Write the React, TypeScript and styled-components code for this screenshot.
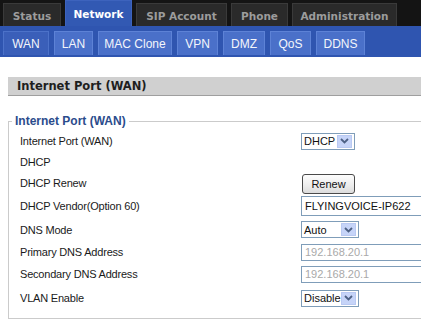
import { createGlobalStyle, styled } from "styled-components";

const Global = createGlobalStyle`
  body {
    margin: 0;
    background: #fff;
    font-family: "DejaVu Sans", Verdana, sans-serif;
  }
  #root {
    width: 421px;
    height: 326px;
    overflow: hidden;
  }
`;

const TopBar = styled.div`
  display: flex;
  align-items: flex-end;
  gap: 4px;
  height: 26px;
  padding-left: 3px;
  background: #141414;
`;

const MainTab = styled.div<{ $w: number; $active?: boolean }>`
  width: ${p => p.$w}px;
  height: ${p => (p.$active ? 26 : 23)}px;
  display: flex;
  align-items: center;
  justify-content: center;
  box-sizing: border-box;
  border: 1px solid ${p => (p.$active ? "#3d63bd" : "#3a3a3a")};
  border-bottom: none;
  background: ${p => (p.$active ? "#3259b3" : "#2a2a2a")};
  color: ${p => (p.$active ? "#ffffff" : "#9c9c9c")};
  font-size: 10.5px;
  font-weight: bold;
  padding-top: ${p => (p.$active ? 0 : 2)}px;
`;

const SubBar = styled.div`
  display: flex;
  gap: 5px;
  height: 31px;
  box-sizing: border-box;
  padding: 5px 0 0 3px;
  background: #2f55b0;
`;

const SubTab = styled.div<{ $w: number; $active?: boolean }>`
  width: ${p => p.$w}px;
  height: 24px;
  box-sizing: border-box;
  display: flex;
  align-items: center;
  justify-content: center;
  background: ${p => (p.$active ? "#3a5fb9" : "#4a70c9")};
  border: 1px solid ${p => (p.$active ? "#4c72c9" : "#5d82d6")};
  border-bottom: none;
  color: #f4f6fb;
  font-family: "Liberation Sans", Arial, sans-serif;
  font-size: 12px;
`;

const Content = styled.div`
  padding: 20px 0 0 8px;
`;

const SectionHeader = styled.div`
  height: 18px;
  display: flex;
  align-items: center;
  padding-left: 9px;
  background: #d0d0d0;
  border-bottom: 1px solid #9f9f9f;
  color: #1e1e1e;
  font-size: 11.5px;
  font-weight: bold;
`;

const Fieldset = styled.fieldset`
  margin: 18px -10px 0 0;
  padding: 2px 0 0 11px;
  height: 205px;
  box-sizing: border-box;
  border: 1px solid #cbcbcb;
`;

const Legend = styled.legend`
  padding: 0 3px;
  margin-left: -8px;
  color: #2b4c8c;
  font-family: "Liberation Sans", Arial, sans-serif;
  font-size: 12px;
  font-weight: bold;
`;

const Row = styled.div<{ $h: number }>`
  display: grid;
  grid-template-columns: 281px 1fr;
  align-items: center;
  height: ${p => p.$h}px;
`;

const Label = styled.div`
  font-family: "Liberation Sans", Arial, sans-serif;
  font-size: 11px;
  letter-spacing: -0.2px;
  color: #1a1a1a;
`;

const SelectBox = styled.div<{ $w: number }>`
  width: ${p => p.$w}px;
  height: 17px;
  box-sizing: border-box;
  display: flex;
  align-items: center;
  justify-content: space-between;
  border: 1px solid #7f9db9;
  padding: 0 2px 0 2px;
  font-family: "Liberation Sans", Arial, sans-serif;
  font-size: 11px;
  color: #111;
  background: #fff;
`;

const Arrow = styled.span`
  width: 15px;
  height: 13px;
  display: flex;
  align-items: center;
  justify-content: center;
  background: #c6d4f8;
  border: 1px solid #b9c9f2;
  box-sizing: border-box;
`;

const Button = styled.button`
  width: 53px;
  height: 20px;
  padding: 0;
  margin-left: 1px;
  border: 1px solid #4a4a4a;
  border-radius: 3px;
  background: linear-gradient(#fdfdfd, #ececec 60%, #dcdcdc);
  font-family: "Liberation Sans", Arial, sans-serif;
  font-size: 11px;
  color: #111;
`;

const TextInput = styled.div<{ $muted?: boolean }>`
  width: 140px;
  height: ${p => (p.$muted ? 17 : 20)}px;
  box-sizing: border-box;
  display: flex;
  align-items: center;
  padding-left: 3px;
  border: 1px solid #7f9db9;
  border-right: none;
  font-family: "Liberation Sans", Arial, sans-serif;
  font-size: 11px;
  color: ${p => (p.$muted ? "#a9a9a9" : "#111")};
`;

function Select({ value, w }: { value: string; w: number }) {
  return (
    <SelectBox $w={w}>
      {value}
      <Arrow>
        <svg width="9" height="6" viewBox="0 0 9 6">
          <path d="M1 1 L4.5 4.5 L8 1" fill="none" stroke="#4d6185" strokeWidth="1.8" />
        </svg>
      </Arrow>
    </SelectBox>
  );
}

const mainTabs = [
  { name: "Status", w: 58 },
  { name: "Network", w: 67, active: true },
  { name: "SIP Account", w: 91 },
  { name: "Phone", w: 57 },
  { name: "Administration", w: 105 },
];

const subTabs = [
  { name: "WAN", w: 46, active: true },
  { name: "LAN", w: 39 },
  { name: "MAC Clone", w: 74 },
  { name: "VPN", w: 41 },
  { name: "DMZ", w: 42 },
  { name: "QoS", w: 41 },
  { name: "DDNS", w: 49 },
];

function App() {
  return (
    <>
      <Global />
      <TopBar>
        {mainTabs.map(t => (
          <MainTab key={t.name} $w={t.w} $active={t.active}>
            {t.name}
          </MainTab>
        ))}
      </TopBar>
      <SubBar>
        {subTabs.map(t => (
          <SubTab key={t.name} $w={t.w} $active={t.active}>
            {t.name}
          </SubTab>
        ))}
      </SubBar>
      <Content>
        <SectionHeader>Internet Port (WAN)</SectionHeader>
        <Fieldset>
          <Legend>Internet Port (WAN)</Legend>
          <Row $h={22}>
            <Label>Internet Port (WAN)</Label>
            <Select value="DHCP" w={54} />
          </Row>
          <Row $h={20}>
            <Label>DHCP</Label>
          </Row>
          <Row $h={22}>
            <Label>DHCP Renew</Label>
            <div>
              <Button>Renew</Button>
            </div>
          </Row>
          <Row $h={24}>
            <Label>DHCP Vendor(Option 60)</Label>
            <TextInput>FLYINGVOICE-IP622</TextInput>
          </Row>
          <Row $h={23}>
            <Label>DNS Mode</Label>
            <Select value="Auto" w={58} />
          </Row>
          <Row $h={22}>
            <Label>Primary DNS Address</Label>
            <TextInput $muted>192.168.20.1</TextInput>
          </Row>
          <Row $h={22}>
            <Label>Secondary DNS Address</Label>
            <TextInput $muted>192.168.20.1</TextInput>
          </Row>
          <Row $h={26}>
            <Label>VLAN Enable</Label>
            <Select value="Disable" w={58} />
          </Row>
        </Fieldset>
      </Content>
    </>
  );
}

export default App;
